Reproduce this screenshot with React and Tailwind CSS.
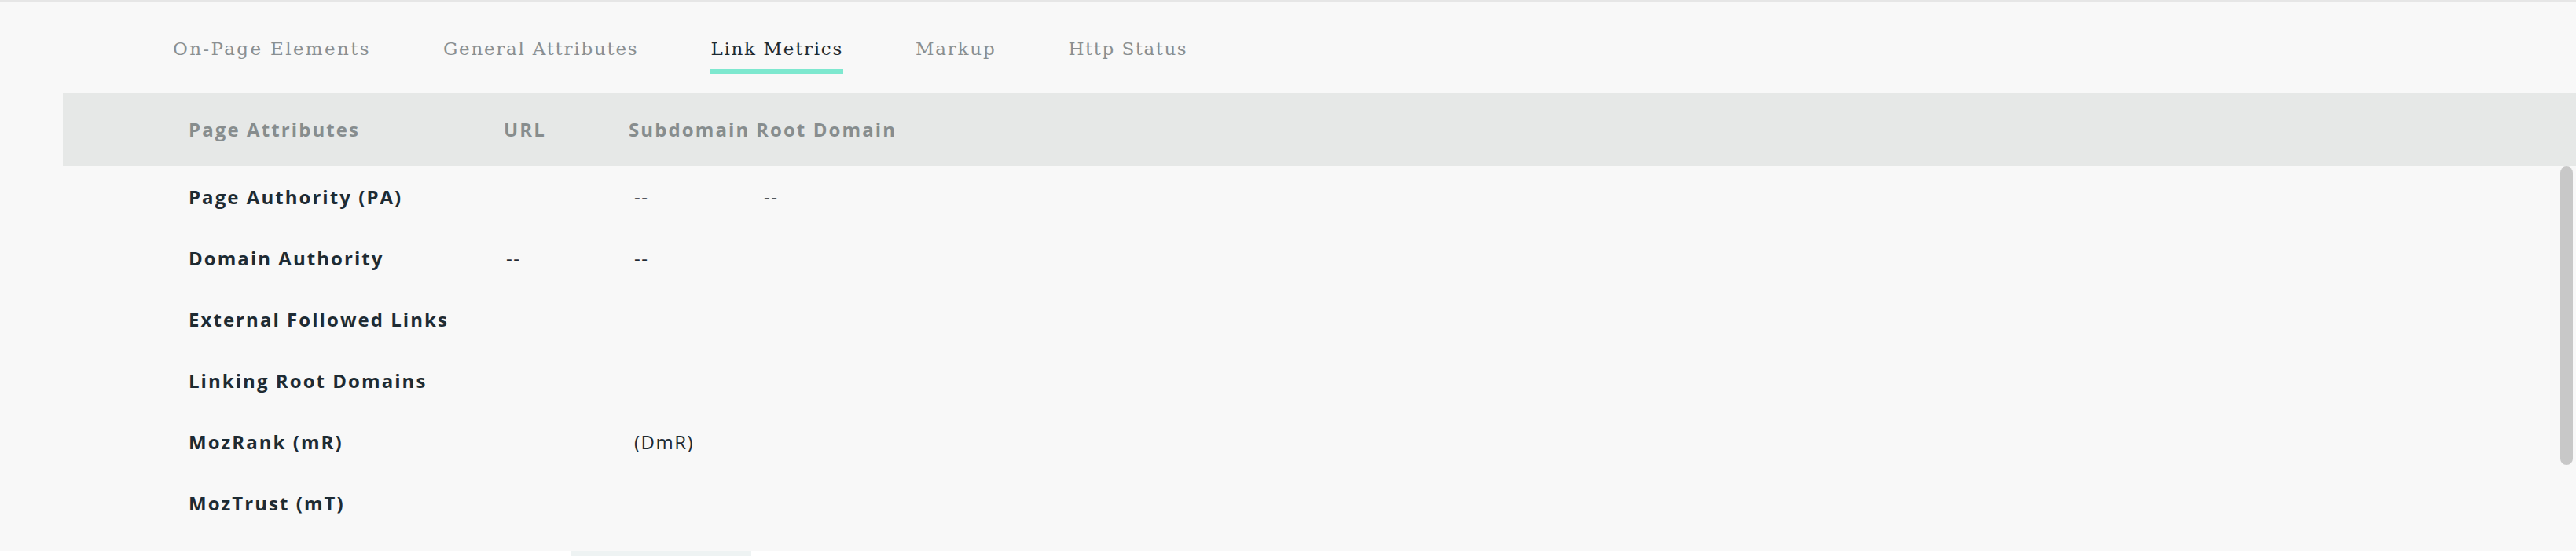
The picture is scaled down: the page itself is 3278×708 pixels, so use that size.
import React from "react";

const tabs = [
  { t: "On-Page Elements", cls: "tracking-[2.35px]" },
  { t: "General Attributes", cls: "tracking-[1.75px]" },
  { t: "Link Metrics", cls: "tracking-[1.7px]" },
  { t: "Markup", cls: "tracking-[1.8px]" },
  { t: "Http Status", cls: "tracking-[1.5px]" },
];

const rows = [
  { label: "Page Authority (PA)", url: "", sub: "--", root: "--" },
  { label: "Domain Authority", url: "--", sub: "--", root: "" },
  { label: "External Followed Links", url: "", sub: "", root: "" },
  { label: "Linking Root Domains", url: "", sub: "", root: "" },
  { label: "MozRank (mR)", url: "", sub: "(DmR)", root: "" },
  { label: "MozTrust (mT)", url: "", sub: "", root: "" },
];

export default function App() {
  return (
    <div className="w-[3278px] h-[708px] bg-white overflow-hidden flex flex-col" style={{ fontFamily: '"Open Sans", sans-serif' }}>
      <div className="h-[2px] bg-[#e6e6e6] shrink-0" />
      <div className="bg-[#f8f8f8] h-[700px] flex flex-col shrink-0">
        {/* Tabs */}
        <div className="h-[116px] flex items-start pl-[174px] pt-[34px]">
          {tabs.map(({ t, cls }) => {
            const active = t === "Link Metrics";
            return (
              <div key={t} className="px-[46px] flex flex-col items-start">
                <span
                  className={`text-[23px] leading-[52px] whitespace-nowrap ${cls} ${active ? "text-[#1f2a30]" : "text-[#8a8f91]"}`}
                  style={{ fontFamily: '"DejaVu Serif", serif' }}
                >
                  {t}
                </span>
                {active ? <div className="h-[6px] w-full bg-[#7ee8cf]" /> : null}
              </div>
            );
          })}
        </div>
        {/* Header band */}
        <div className="ml-[80px] h-[94px] bg-[#e6e8e7] flex items-center pl-[160px] shrink-0">
          <div className="w-[401px] text-[24px] font-bold tracking-[2.1px] text-[#878d8e]">Page Attributes</div>
          <div className="w-[159px] text-[24px] font-bold tracking-[2.1px] text-[#878d8e]">URL</div>
          <div className="w-[162px] text-[24px] font-bold tracking-[2.1px] text-[#878d8e] whitespace-nowrap">Subdomain</div>
          <div className="text-[24px] font-bold tracking-[2.1px] text-[#878d8e] whitespace-nowrap">Root Domain</div>
        </div>
        {/* Body */}
        <div className="relative flex-1 overflow-hidden">
          <div className="flex flex-col pl-[240px]">
            {rows.map((r) => (
              <div key={r.label} className="h-[78px] flex items-center text-[24px] tracking-[1.5px] text-[#1e2b33]">
                <div className="w-[401px] font-bold tracking-[2.05px] whitespace-nowrap">{r.label}</div>
                <div className="w-[159px] pl-[3px]">{r.url}</div>
                <div className="w-[162px] pl-[7px]">{r.sub}</div>
                <div className="pl-[10px]">{r.root}</div>
              </div>
            ))}
          </div>
          <div className="absolute right-[4px] top-0 w-[16px] h-[380px] rounded-full bg-[#c8c8c8]" />
        </div>
      </div>
      <div className="flex-1 flex">
        <div className="ml-[726px] w-[230px] bg-[#eef3f3]" />
      </div>
    </div>
  );
}
